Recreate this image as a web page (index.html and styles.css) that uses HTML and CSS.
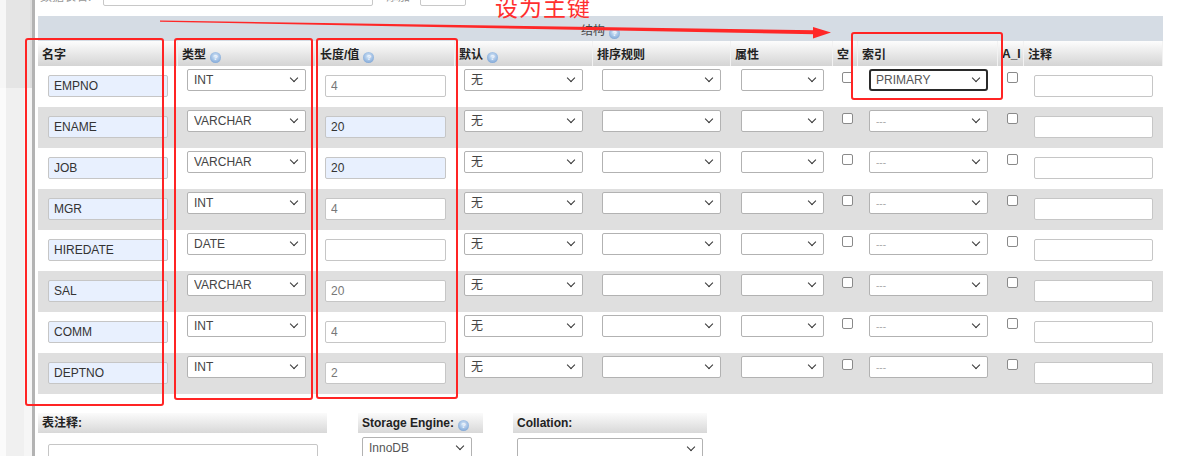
FILE: index.html
```html
<!DOCTYPE html>
<html lang="zh">
<head>
<meta charset="utf-8">
<title>结构</title>
<link rel="stylesheet" href="styles.css">
</head>
<body>
<div class="page">
  <aside class="sidebar"><div class="sb-top"></div><div class="sb-bottom"></div></aside>
  <main class="main">
    <div class="toprow">
      <span class="tlabel">数据表名:</span>
      <input class="tin tname" type="text" value="">
      <span class="tlabel2">添加</span>
      <input class="tin tnum" type="text" value="">
      <span class="tlabel3">·</span>
    </div>
    <table class="struct">
      <caption>结构<span class="help">?</span></caption>
      <colgroup>
        <col class="c1"><col class="c2"><col class="c3"><col class="c4"><col class="c5">
        <col class="c6"><col class="c7"><col class="c8"><col class="c9"><col class="c10">
      </colgroup>
      <thead>
        <tr>
          <th>名字</th>
          <th>类型<span class="help">?</span></th>
          <th>长度/值<span class="help">?</span></th>
          <th>默认<span class="help">?</span></th>
          <th>排序规则</th>
          <th>属性</th>
          <th>空</th>
          <th>索引</th>
          <th>A_I</th>
          <th>注释</th>
        </tr>
      </thead>
      <tbody>
        <tr>
          <td><input class="in name" type="text" value="EMPNO"></td>
          <td><span class="sel w119"><select><option>INT</option></select></span></td>
          <td><input class="in len" type="text" value="4"></td>
          <td><span class="sel w119"><select><option>无</option></select></span></td>
          <td><span class="sel w119"><select><option></option></select></span></td>
          <td><span class="sel w83"><select><option></option></select></span></td>
          <td><input class="cb" type="checkbox"></td>
          <td><span class="sel w119 pri"><select><option>PRIMARY</option></select></span></td>
          <td><input class="cb" type="checkbox"></td>
          <td><input class="in cmt" type="text" value=""></td>
        </tr>
        <tr>
          <td><input class="in name" type="text" value="ENAME"></td>
          <td><span class="sel w119"><select><option>VARCHAR</option></select></span></td>
          <td><input class="in len auto" type="text" value="20"></td>
          <td><span class="sel w119"><select><option>无</option></select></span></td>
          <td><span class="sel w119"><select><option></option></select></span></td>
          <td><span class="sel w83"><select><option></option></select></span></td>
          <td><input class="cb" type="checkbox"></td>
          <td><span class="sel w119"><select class="dash"><option>---</option></select></span></td>
          <td><input class="cb" type="checkbox"></td>
          <td><input class="in cmt" type="text" value=""></td>
        </tr>
        <tr>
          <td><input class="in name" type="text" value="JOB"></td>
          <td><span class="sel w119"><select><option>VARCHAR</option></select></span></td>
          <td><input class="in len auto" type="text" value="20"></td>
          <td><span class="sel w119"><select><option>无</option></select></span></td>
          <td><span class="sel w119"><select><option></option></select></span></td>
          <td><span class="sel w83"><select><option></option></select></span></td>
          <td><input class="cb" type="checkbox"></td>
          <td><span class="sel w119"><select class="dash"><option>---</option></select></span></td>
          <td><input class="cb" type="checkbox"></td>
          <td><input class="in cmt" type="text" value=""></td>
        </tr>
        <tr>
          <td><input class="in name" type="text" value="MGR"></td>
          <td><span class="sel w119"><select><option>INT</option></select></span></td>
          <td><input class="in len" type="text" value="4"></td>
          <td><span class="sel w119"><select><option>无</option></select></span></td>
          <td><span class="sel w119"><select><option></option></select></span></td>
          <td><span class="sel w83"><select><option></option></select></span></td>
          <td><input class="cb" type="checkbox"></td>
          <td><span class="sel w119"><select class="dash"><option>---</option></select></span></td>
          <td><input class="cb" type="checkbox"></td>
          <td><input class="in cmt" type="text" value=""></td>
        </tr>
        <tr>
          <td><input class="in name" type="text" value="HIREDATE"></td>
          <td><span class="sel w119"><select><option>DATE</option></select></span></td>
          <td><input class="in len" type="text" value=""></td>
          <td><span class="sel w119"><select><option>无</option></select></span></td>
          <td><span class="sel w119"><select><option></option></select></span></td>
          <td><span class="sel w83"><select><option></option></select></span></td>
          <td><input class="cb" type="checkbox"></td>
          <td><span class="sel w119"><select class="dash"><option>---</option></select></span></td>
          <td><input class="cb" type="checkbox"></td>
          <td><input class="in cmt" type="text" value=""></td>
        </tr>
        <tr>
          <td><input class="in name" type="text" value="SAL"></td>
          <td><span class="sel w119"><select><option>VARCHAR</option></select></span></td>
          <td><input class="in len" type="text" value="20"></td>
          <td><span class="sel w119"><select><option>无</option></select></span></td>
          <td><span class="sel w119"><select><option></option></select></span></td>
          <td><span class="sel w83"><select><option></option></select></span></td>
          <td><input class="cb" type="checkbox"></td>
          <td><span class="sel w119"><select class="dash"><option>---</option></select></span></td>
          <td><input class="cb" type="checkbox"></td>
          <td><input class="in cmt" type="text" value=""></td>
        </tr>
        <tr>
          <td><input class="in name" type="text" value="COMM"></td>
          <td><span class="sel w119"><select><option>INT</option></select></span></td>
          <td><input class="in len" type="text" value="4"></td>
          <td><span class="sel w119"><select><option>无</option></select></span></td>
          <td><span class="sel w119"><select><option></option></select></span></td>
          <td><span class="sel w83"><select><option></option></select></span></td>
          <td><input class="cb" type="checkbox"></td>
          <td><span class="sel w119"><select class="dash"><option>---</option></select></span></td>
          <td><input class="cb" type="checkbox"></td>
          <td><input class="in cmt" type="text" value=""></td>
        </tr>
        <tr>
          <td><input class="in name" type="text" value="DEPTNO"></td>
          <td><span class="sel w119"><select><option>INT</option></select></span></td>
          <td><input class="in len" type="text" value="2"></td>
          <td><span class="sel w119"><select><option>无</option></select></span></td>
          <td><span class="sel w119"><select><option></option></select></span></td>
          <td><span class="sel w83"><select><option></option></select></span></td>
          <td><input class="cb" type="checkbox"></td>
          <td><span class="sel w119"><select class="dash"><option>---</option></select></span></td>
          <td><input class="cb" type="checkbox"></td>
          <td><input class="in cmt" type="text" value=""></td>
        </tr>
      </tbody>
    </table>
    <div class="extras">
      <div class="blk blk1">
        <div class="bhead">表注释:</div>
        <input class="in tcomment" type="text" value="">
      </div>
      <div class="blk blk2">
        <div class="bhead">Storage Engine:<span class="help">?</span></div>
        <span class="sel wEng"><select><option>InnoDB</option></select></span>
      </div>
      <div class="blk blk3">
        <div class="bhead">Collation:</div>
        <span class="sel wColl"><select><option></option></select></span>
      </div>
    </div>
  </main>

  <div class="annot">
    <svg class="arrow" width="1189" height="456" viewBox="0 0 1189 456">
      <polygon points="160,20.6 815,30.2 815,34.2 160,21.8" fill="#ff2727"/>
      <polygon points="813,27 831,32.6 813,38.4" fill="#ff2727"/>
    </svg>
    <div class="rtext">设为主键</div>
    <div class="rbox rb1"></div>
    <div class="rbox rb2"></div>
    <div class="rbox rb3"></div>
    <div class="rbox rb4"></div>
  </div>
</div>
</body>
</html>
```
FILE: styles.css
```css
html, body {
  margin: 0;
  padding: 0;
}
body {
  font-family: "Liberation Sans", "Noto Sans CJK SC", sans-serif;
  font-size: 12px;
  color: #333;
  background: #fff;
  height: 456px;
  overflow: hidden;
}
.page {
  position: relative;
  display: flex;
  height: 456px;
}

/* left navigation strip */
.sidebar {
  width: 32px;
  flex: none;
  display: flex;
  flex-direction: column;
  border-right: 3px solid #b3b3b3;
}
.sb-top {
  height: 88px;
  background: linear-gradient(to right, #f7f7f7 0 6px, #e5e5e5 6px 30px, #dedede 30px);
}
.sb-bottom {
  flex: 1;
  background: linear-gradient(to right, #fbfbfb 0 6px, #f0f0f0 6px 24px, #f6f6f6 24px);
}

.main {
  flex: 1;
  padding-left: 3px;
}

/* partially visible top row */
.toprow {
  display: flex;
  align-items: center;
  height: 22px;
  margin-top: -16px;
  margin-bottom: 10px;
  color: #999;
  font-size: 12px;
  font-family: "Noto Sans CJK SC", sans-serif;
}
.tlabel { width: 63px; padding-left: 2px; }
.tin {
  box-sizing: border-box;
  height: 22px;
  border: 1px solid #c8c8c8;
  border-radius: 2px;
  background: #fff;
}
.tname { width: 270px; }
.tlabel2 { margin-left: 13px; width: 34px; }
.tnum { width: 46px; }
.tlabel3 { margin-left: 7px; }

/* structure table */
.struct {
  border-collapse: collapse;
  border-spacing: 0;
  table-layout: fixed;
  width: 1125px;
}
.struct caption {
  height: 25px;
  line-height: 27px;
  background: #d5dce4;
  text-align: center;
  font-family: "Noto Sans CJK SC", sans-serif;
  font-size: 12px;
  color: #444;
}
.c1 { width: 140px; }
.c2 { width: 138px; }
.c3 { width: 139px; }
.c4 { width: 138px; }
.c5 { width: 138px; }
.c6 { width: 102px; }
.c7 { width: 25px; }
.c8 { width: 140px; }
.c9 { width: 26px; }
.c10 { width: 139px; }

.struct th {
  height: 25px;
  padding: 0 0 0 4px;
  text-align: left;
  vertical-align: middle;
  white-space: nowrap;
  overflow: hidden;
  font-family: "Liberation Sans", "Noto Sans CJK SC", sans-serif;
  font-weight: bold;
  font-size: 12px;
  color: #222;
  background: linear-gradient(#fdfdfd, #d4d4d4);
  box-shadow: inset -1px 0 0 #f2f2f2;
}
.struct td {
  height: 41px;
  padding: 0 0 0 9px;
  vertical-align: top;
}
.struct td:nth-child(1),
.struct td:nth-child(6),
.struct td:nth-child(10) { padding-left: 10px; }
.struct td:nth-child(8) { padding-left: 11px; }
.struct tbody tr:nth-child(even) td { background: #dfdfdf; }

.help {
  display: inline-block;
  width: 11px;
  height: 11px;
  margin-left: 4px;
  border-radius: 50%;
  vertical-align: -1px;
  background: radial-gradient(circle at 50% 40%, #dce9f8 0, #9fbfe4 50%, #6a94cb 100%);
  color: #eef5fd;
  font: bold 8px/11px "Liberation Sans", sans-serif;
  text-align: center;
}

/* controls */
.in {
  display: block;
  box-sizing: border-box;
  height: 22px;
  margin: 9px 0 0 0;
  padding: 0 5px;
  border: 1px solid #c6c6c6;
  border-radius: 2px;
  background: #fff;
  font: 12px "Liberation Sans", "Noto Sans CJK SC", sans-serif;
  color: #333;
}
.name { width: 120px; background: #e8f0fe; color: #333; }
.len { width: 121px; color: #777; }
.len.auto { background: #e8f0fe; color: #333; }
.cmt { width: 119px; }

.sel {
  display: block;
  position: relative;
  height: 22px;
  margin-top: 3px;
}
.w119 { width: 119px; }
.w83 { width: 83px; }
.sel select {
  -webkit-appearance: none;
  appearance: none;
  display: block;
  box-sizing: border-box;
  width: 100%;
  height: 22px;
  margin: 0;
  padding: 0 6px;
  border: 1px solid #b2b2b2;
  border-radius: 2px;
  background: #fff;
  font: 12px "Liberation Sans", "Noto Sans CJK SC", sans-serif;
  color: #444;
}
.sel::after {
  content: "";
  position: absolute;
  right: 9px;
  top: 6px;
  width: 5px;
  height: 5px;
  border-right: 1.7px solid #333;
  border-bottom: 1.7px solid #333;
  transform: rotate(45deg);
  pointer-events: none;
}
.sel select.dash { color: #aaa; font-size: 10px; }
.sel.pri select {
  border: 2px solid #2a2a2a;
  border-radius: 3px;
  padding-left: 5px;
  color: #555;
}

.cb {
  -webkit-appearance: none;
  appearance: none;
  display: block;
  box-sizing: border-box;
  width: 11px;
  height: 11px;
  margin: 6px 0 0 0;
  border: 1px solid #8a8a8a;
  border-radius: 2px;
  background: #fff;
}

/* lower options */
.extras {
  display: flex;
  margin-top: 19px;
}
.blk1 { width: 289px; }
.blk2 { width: 125px; margin-left: 31px; }
.blk3 { width: 194px; margin-left: 30px; }
.bhead {
  height: 20px;
  line-height: 20px;
  padding-left: 4px;
  font-family: "Liberation Sans", "Noto Sans CJK SC", sans-serif;
  font-weight: bold;
  font-size: 12px;
  color: #222;
  background: linear-gradient(#fbfbfb, #d8d8d8);
}
.tcomment {
  width: 270px;
  margin: 11px 0 0 10px;
}
.wEng { width: 110px; margin: 4px 0 0 4px; }
.wEng select { color: #555; }
.wColl { width: 186px; margin: 5px 0 0 4px; }

/* red annotations drawn over the screenshot */
.annot {
  position: absolute;
  left: 0;
  top: 0;
  width: 1189px;
  height: 456px;
  pointer-events: none;
}
.arrow {
  position: absolute;
  left: 0;
  top: 0;
}
.rtext {
  position: absolute;
  left: 495px;
  top: -5px;
  font: 23px/23px "Noto Sans CJK SC", sans-serif;
  letter-spacing: 1px;
  color: #ff2f2f;
}
.rbox {
  position: absolute;
  box-sizing: border-box;
  border: 2.5px solid #ff2424;
  border-radius: 3px;
}
.rb1 { left: 25px; top: 38px; width: 139px; height: 368px; }
.rb2 { left: 174px; top: 38px; width: 139px; height: 362px; }
.rb3 { left: 316px; top: 38px; width: 142px; height: 361px; }
.rb4 { left: 851px; top: 32px; width: 152px; height: 68px; }
```
